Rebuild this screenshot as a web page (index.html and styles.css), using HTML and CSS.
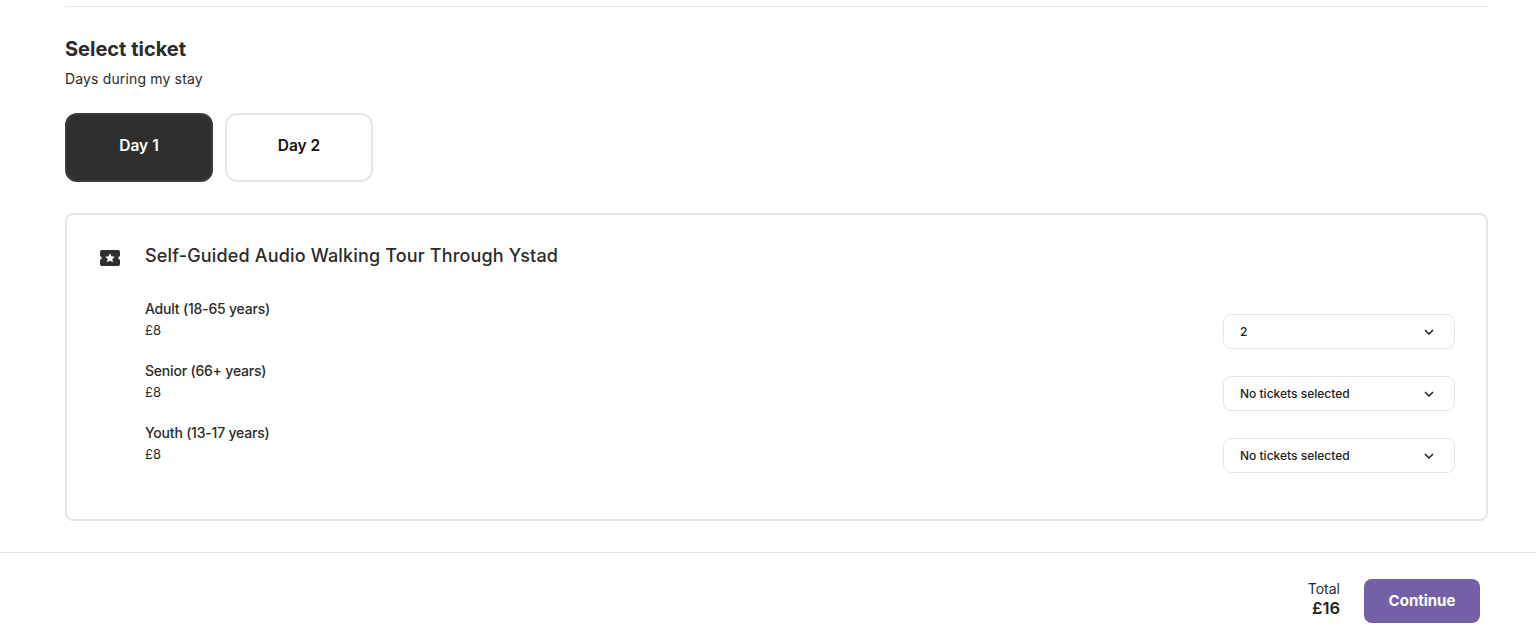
FILE: index.html
```html
<!DOCTYPE html>
<html lang="en">
<head>
<meta charset="utf-8">
<title>Select ticket</title>
<link rel="stylesheet" href="styles.css">
</head>
<body>
<main class="content">
  <div class="section">
    <h2 class="title">Select ticket</h2>
    <p class="subtitle">Days during my stay</p>
    <div class="days">
      <button class="day day-active">Day 1</button>
      <button class="day">Day 2</button>
    </div>
    <section class="card">
      <div class="card-head">
        <svg class="ticket-icon" viewBox="0 0 20 16" width="20" height="16" aria-hidden="true">
          <path fill="#2f2f2f" d="M2 0h16a2 2 0 0 1 2 2v4.300a1.700 1.700 0 0 0 0 3.400V14a2 2 0 0 1-2 2H2a2 2 0 0 1-2-2V9.700a1.700 1.700 0 0 0 0-3.400V2a2 2 0 0 1 2-2z"/>
          <path fill="#fff" d="M10 3.300l1.450 2.950 3.250.45-2.350 2.250.55 3.200L10 10.650l-2.900 1.500.55-3.200L5.300 6.700l3.250-.45z"/>
        </svg>
        <h3 class="tour">Self-Guided Audio Walking Tour Through Ystad</h3>
      </div>
      <div class="rows">
        <div class="row">
          <div class="info"><div class="name">Adult (18-65 years)</div><div class="price">£8</div></div>
          <div class="select"><span>2</span><svg class="chev" viewBox="0 0 10 6" width="10" height="6"><path d="M1 1l4 4 4-4" fill="none" stroke="#222" stroke-width="1.500"/></svg></div>
        </div>
        <div class="row">
          <div class="info"><div class="name">Senior (66+ years)</div><div class="price">£8</div></div>
          <div class="select"><span>No tickets selected</span><svg class="chev" viewBox="0 0 10 6" width="10" height="6"><path d="M1 1l4 4 4-4" fill="none" stroke="#222" stroke-width="1.500"/></svg></div>
        </div>
        <div class="row">
          <div class="info"><div class="name">Youth (13-17 years)</div><div class="price">£8</div></div>
          <div class="select"><span>No tickets selected</span><svg class="chev" viewBox="0 0 10 6" width="10" height="6"><path d="M1 1l4 4 4-4" fill="none" stroke="#222" stroke-width="1.500"/></svg></div>
        </div>
      </div>
    </section>
  </div>
</main>
<footer class="footer">
  <div class="total"><span class="total-label">Total</span><strong class="total-value">£16</strong></div>
  <button class="continue">Continue</button>
</footer>
</body>
</html>
```
FILE: styles.css
```css
* { box-sizing: border-box; }
html, body { margin: 0; padding: 0; height: 644px; overflow: hidden; background: #fff; }
body { font-family: "Inter", "Liberation Sans", sans-serif; color: #2b2b2b; }
.content { padding: 6px 48px 0 65px; height: 546px; }
.section { border-top: 1px solid #e6e6e6; padding-top: 28px; }
.title { margin: 0; font-size: 20px; line-height: 28px; font-weight: 700; letter-spacing: 0; }
.subtitle { margin: 6px 0 0; font-size: 14px; line-height: 20px; letter-spacing: 0.15px; }
.days { display: flex; gap: 12px; margin-top: 24px; }
.day { width: 148px; height: 69px; border: 2px solid #e6e6e6; border-radius: 12px; background: #fff; font: 600 15.5px "Inter", sans-serif; color: #111; padding: 0 0 5px; }
.day-active { background: #2f2f2f; border-color: #3c3c3c; color: #fff; }
.card { margin-top: 31px; height: 308px; border: 2px solid #e6e6e6; border-radius: 8px; padding: 27px 31px 0 33px; }
.card-head { display: flex; align-items: center; gap: 25px; height: 28px; }
.ticket-icon { flex: none; margin-top: 3px; }
.tour { margin: 0; font-size: 18px; line-height: 26px; font-weight: 500; letter-spacing: 0.16px; }
.rows { display: flex; flex-direction: column; gap: 20px; margin: 29px 0 0 45px; }
.row { display: flex; justify-content: space-between; height: 42px; }
.name { font-size: 14px; line-height: 20px; font-weight: 500; letter-spacing: -0.2px; }
.price { font-size: 13px; line-height: 20px; margin-top: 1px; }
.select { width: 232px; height: 35px; margin-top: 15px; border: 1px solid #e6e6e6; border-radius: 8px; display: flex; align-items: center; justify-content: space-between; padding: 0 20px 0 16px; font-size: 12px; font-weight: 500; color: #222; }
.footer { height: 92px; margin-top: 6px; border-top: 1px solid #e2e2e2; display: flex; justify-content: flex-end; align-items: flex-start; padding: 26px 56px 0 0; gap: 24px; }
.total { display: flex; flex-direction: column; align-items: flex-end; }
.total-label { font-size: 14px; line-height: 19px; }
.total-value { font-size: 16.5px; line-height: 20px; font-weight: 600; color: #222; }
.continue { width: 116px; height: 44px; border: 0; border-radius: 8px; background: #7360a6; color: #fff; font: 700 15px "Inter", sans-serif; padding: 0 0 2px; }
```
